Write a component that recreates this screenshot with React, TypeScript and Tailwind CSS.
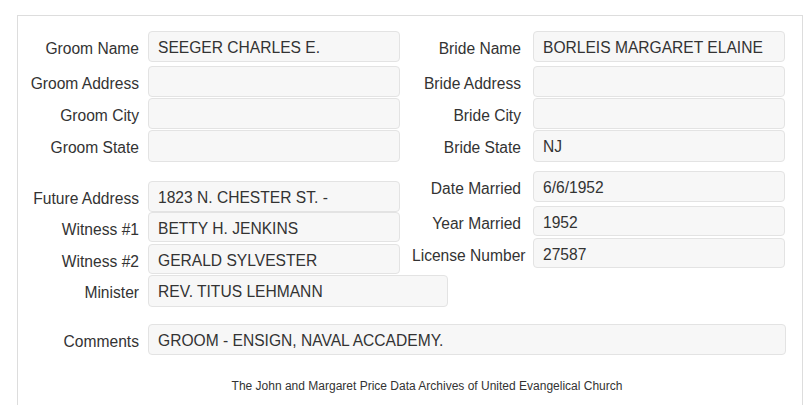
type FieldProps = {
  label: string;
  value?: string;
  className?: string;
  labelClass: string;
  boxClass: string;
};

function Field({ label, value, className, labelClass, boxClass }: FieldProps) {
  return (
    <div className={"flex items-start " + (className ?? "")}>
      <div
        className={
          "shrink-0 relative top-[3px] text-right whitespace-nowrap leading-[30px] " +
          labelClass
        }
      >
        {label}
      </div>
      <div
        className={
          "shrink-0 rounded-[4px] border border-[#e3e3e3] bg-[#f7f7f7] pl-[9px] pt-[1px] leading-[30px] overflow-hidden whitespace-nowrap " +
          boxClass
        }
      >
        {value}
      </div>
    </div>
  );
}

const leftLabel = "w-[121px] mr-[9px]";
const rightLabel = "w-[109px] mr-[12px]";

export default function App() {
  return (
    <div className="h-[405px] overflow-hidden bg-white font-['Liberation_Sans',Arial,sans-serif] text-[15.6px] text-[#333]">
      <div className="ml-[17px] pt-[15px]">
        <div className="w-[786px] h-[390px] border-t border-l border-r border-[#dddddd] pt-[15px]">
          {/* groom / bride */}
          <div className="flex">
            <div className="w-[394px] shrink-0 flex flex-col">
              <Field label="Groom Name" value="SEEGER CHARLES E." labelClass={leftLabel} boxClass="w-[252px] h-[31px]" />
              <Field label="Groom Address" className="mt-[4px]" labelClass={leftLabel} boxClass="w-[252px] h-[31px]" />
              <Field label="Groom City" className="mt-[1px]" labelClass={leftLabel} boxClass="w-[252px] h-[31px]" />
              <Field label="Groom State" className="mt-[1px]" labelClass={leftLabel} boxClass="w-[252px] h-[32px]" />
            </div>
            <div className="flex flex-col">
              <Field label="Bride Name" value="BORLEIS MARGARET ELAINE" labelClass={rightLabel} boxClass="w-[252px] h-[31px]" />
              <Field label="Bride Address" className="mt-[4px]" labelClass={rightLabel} boxClass="w-[252px] h-[31px]" />
              <Field label="Bride City" className="mt-[1px]" labelClass={rightLabel} boxClass="w-[252px] h-[31px]" />
              <Field label="Bride State" value="NJ" className="mt-[1px]" labelClass={rightLabel} boxClass="w-[252px] h-[32px]" />
            </div>
          </div>

          {/* address / witnesses / dates */}
          <div className="flex items-start">
            <div className="w-[394px] shrink-0 flex flex-col mt-[19px]">
              <Field label="Future Address" value="1823 N. CHESTER ST. -" labelClass={leftLabel} boxClass="w-[252px] h-[31px]" />
              <Field label="Witness #1" value="BETTY H. JENKINS" labelClass={leftLabel} boxClass="w-[252px] h-[30px]" />
              <Field label="Witness #2" value="GERALD SYLVESTER" className="mt-[2px]" labelClass={leftLabel} boxClass="w-[252px] h-[30px]" />
              <Field label="Minister" value="REV. TITUS LEHMANN" className="mt-[1px]" labelClass={leftLabel} boxClass="w-[300px] h-[32px]" />
            </div>
            <div className="flex flex-col mt-[9px]">
              <Field label="Date Married" value="6/6/1952" labelClass={rightLabel} boxClass="w-[252px] h-[31px]" />
              <Field label="Year Married" value="1952" className="mt-[4px]" labelClass={rightLabel} boxClass="w-[252px] h-[30px]" />
              <Field label="License Number" value="27587" className="mt-[2px]" labelClass={rightLabel} boxClass="w-[252px] h-[30px]" />
            </div>
          </div>

          <Field
            label="Comments"
            value="GROOM - ENSIGN, NAVAL ACCADEMY."
            className="mt-[17px]"
            labelClass={leftLabel}
            boxClass="w-[638px] h-[31px]"
          />

          <div className="mt-[23px] pl-[34px] text-center text-[12px] leading-[16px]">
            The John and Margaret Price Data Archives of United Evangelical Church
          </div>
        </div>
      </div>
    </div>
  );
}
